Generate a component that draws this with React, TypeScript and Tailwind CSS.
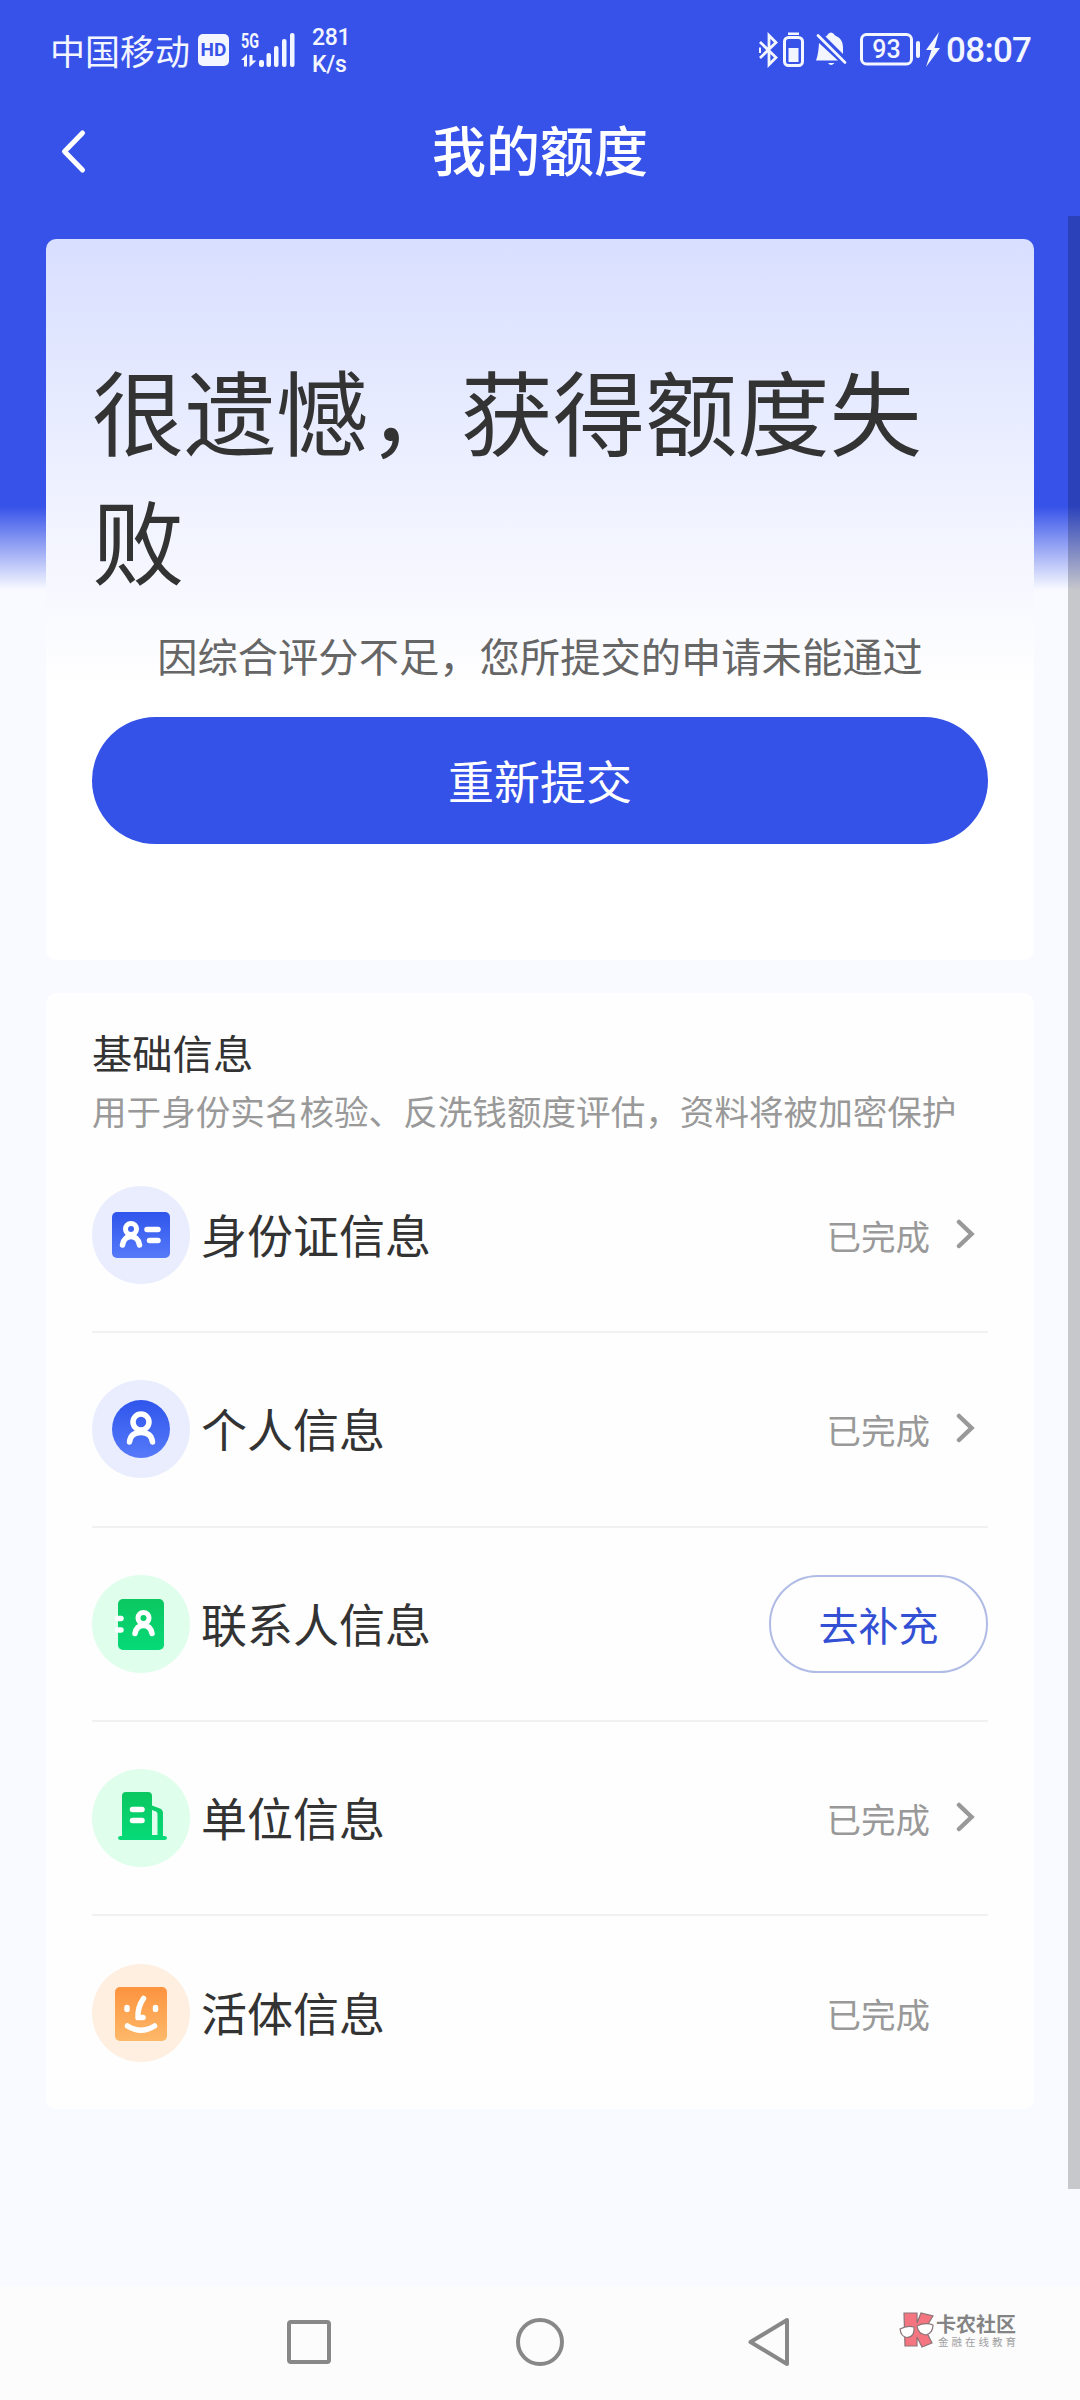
import type { ReactNode } from "react";

function SignalIcon() {
  return (
    <svg className="overflow-visible" width="56" height="36" viewBox="0 0 56 36" fill="#f3f5ff">
      <text x="0" y="15.500" fontFamily="Roboto" fontSize="20" fontWeight="700" textLength="18" lengthAdjust="spacingAndGlyphs">5G</text>
      <path d="M0 28L6 22V34.500H3V28ZM8.500 23H11.500V28.500H15.500L8.500 35Z" />
      <rect x="18" y="28" width="5" height="7" rx="2" />
      <rect x="25.500" y="21" width="4.500" height="14" rx="2" />
      <rect x="33" y="14" width="4.500" height="21" rx="2" />
      <rect x="41" y="7" width="4.500" height="28" rx="2" />
      <rect x="49" y="1" width="4.500" height="34" rx="2" />
    </svg>
  );
}

function StatusBar() {
  return (
    <div className="flex h-[104px] items-start justify-between pl-[50px] pr-[49px] text-[#f3f5ff]">
      <div className="flex items-start">
        <span className="mt-[24px] w-[142px] whitespace-nowrap text-[35px] leading-[52px]">中国移动</span>
        <span className="ml-[6px] mt-[34px] flex h-[32px] w-[31px] items-center justify-center rounded-[5px] bg-[#f3f5ff] font-[Roboto] text-[19px] font-bold leading-[32px] text-[#3652e9]">
          HD
        </span>
        <span className="ml-[12px] mt-[32px]"><SignalIcon /></span>
        <span className="ml-[15px] mt-[24px] font-[Roboto] text-[23px] font-medium leading-[27px] tracking-[-0.3px]">281<br />K/s</span>
      </div>
      <div className="flex items-start">
        <svg className="mt-[32px]" width="182" height="36" viewBox="758 32 182 36" fill="none" stroke="#f3f5ff">
          <path d="M760 42L776 57.500L769 64.500V35.500L776 42.500L760 58" strokeWidth="2.800" />
          <path d="M760 47.500V53" strokeWidth="2" />
          <rect x="784.500" y="37.500" width="18" height="28" rx="4" strokeWidth="3" />
          <rect x="788" y="32.500" width="11" height="2.500" fill="#f3f5ff" stroke="none" />
          <rect x="788.500" y="48" width="10" height="14" fill="#f3f5ff" stroke="none" />
          <path d="M825.500 36.500Q828 35 828 34Q831 31 834 34Q834 35 836 36Q843 39 843 47V54ZM819 43L838 60.500H816Q818.500 54 819 43ZM828 63H834.500Q831 67 828 63Z" fill="#f3f5ff" stroke="none" />
          <path d="M818 35.500L845 62.500" strokeWidth="2.800" strokeLinecap="round" />
          <rect x="861.500" y="34.500" width="50" height="29.500" rx="5" strokeWidth="3" />
          <text x="886.500" y="58" textAnchor="middle" fontFamily="Roboto" fontSize="25" fontWeight="500" fill="#f3f5ff" stroke="none">93</text>
          <path d="M918 43V56" strokeWidth="4" strokeLinecap="round" />
          <path d="M939 32L926 50H931.500L926 67L940 48H934.500Z" fill="#f3f5ff" stroke="none" />
        </svg>
        <span className="ml-[6px] mt-[30px] w-[85px] font-[Roboto] text-[35px] font-medium leading-[42px] tracking-[-0.7px]">08:07</span>
      </div>
    </div>
  );
}

function IdCardIcon() {
  return (
    <svg width="98" height="98" viewBox="0 0 98 98" fill="none" stroke="#fff" strokeLinecap="round">
      <circle cx="49" cy="49" r="49" fill="#e9edfe" stroke="none" />
      <rect x="20" y="26" width="58" height="46" rx="5" fill="url(#blue)" stroke="none" />
      <circle cx="39" cy="43" r="5.500" strokeWidth="5" />
      <path d="M30.500 59Q32 50.500 39 50.500Q46 50.500 47.500 59" strokeWidth="5.500" />
      <path d="M55 43.500H66M57.500 54.500H66" strokeWidth="5.500" />
    </svg>
  );
}

function PersonIcon() {
  return (
    <svg width="98" height="98" viewBox="0 0 98 98" fill="none" stroke="#fff" strokeLinecap="round">
      <circle cx="49" cy="49" r="49" fill="#e9edfe" stroke="none" />
      <circle cx="49" cy="49" r="29" fill="url(#blue)" stroke="none" />
      <circle cx="49" cy="42" r="8" strokeWidth="5.500" />
      <path d="M37.500 62Q38.500 52.500 49 52.500Q59.500 52.500 60.500 62" strokeWidth="5.500" />
    </svg>
  );
}

function ContactIcon() {
  return (
    <svg width="98" height="98" viewBox="0 0 98 98" fill="none" stroke="#fff" strokeLinecap="round">
      <circle cx="49" cy="49" r="49" fill="#e0feec" stroke="none" />
      <rect x="26" y="24" width="46" height="51" rx="5" fill="url(#green)" stroke="none" />
      <circle cx="51.500" cy="43" r="5.500" strokeWidth="5" />
      <path d="M43 58.500Q44.500 50.500 51.500 50.500Q58.500 50.500 60 58.500" strokeWidth="5.500" />
      <path d="M25.500 43.500H29M25.500 55H29" strokeWidth="5.500" />
    </svg>
  );
}

function BuildingIcon() {
  return (
    <svg width="98" height="98" viewBox="0 0 98 98" fill="none" stroke="#fff" strokeLinecap="round">
      <circle cx="49" cy="49" r="49" fill="#e0feec" stroke="none" />
      <path d="M30 67V27Q30 23 34 23H56Q60 23 60 27V36.500L68 39.500Q71 41 71 44V67H72.500Q75 67 75 69Q75 71 72.500 71H28.500Q26 71 26 69Q26 67 28.500 67Z" fill="url(#green)" stroke="none" />
      <path d="M60 41L64 42.500Q65.500 43 65.500 45V66H60Z" fill="#e0feec" stroke="none" />
      <path d="M40.500 40.500H50M40.500 51.500H50" strokeWidth="5.500" />
    </svg>
  );
}

function FaceIcon() {
  return (
    <svg width="98" height="98" viewBox="0 0 98 98" fill="none" stroke="#fff" strokeLinecap="round" strokeLinejoin="round">
      <circle cx="49" cy="49" r="49" fill="#feefe1" stroke="none" />
      <rect x="23" y="23" width="52" height="54" rx="5" fill="url(#orange)" stroke="none" />
      <path d="M51.500 34.500Q45.500 43 46 53.500H51" strokeWidth="5.500" />
      <path d="M35.500 62Q49 70.500 62.500 62" strokeWidth="5.500" />
      <path d="M35 43.500V45.500M63.500 43.500V45.500" strokeWidth="5.500" />
    </svg>
  );
}

function Gradients() {
  return (
    <svg width="0" height="0" className="absolute">
      <defs>
        <linearGradient id="blue" x1="0" y1="0" x2="0" y2="1"><stop stopColor="#2f55ec" /><stop offset="1" stopColor="#567af9" /></linearGradient>
        <linearGradient id="green" x1="0" y1="0" x2="0" y2="1"><stop stopColor="#0bc760" /><stop offset="1" stopColor="#06da78" /></linearGradient>
        <linearGradient id="orange" x1="0" y1="0" x2="0" y2="1"><stop stopColor="#fd933f" /><stop offset="1" stopColor="#fdb969" /></linearGradient>
      </defs>
    </svg>
  );
}

type Item = { icon: ReactNode; label: string; state: "done" | "todo"; arrow: boolean };

const items: Item[] = [
  { icon: <IdCardIcon />, label: "身份证信息", state: "done", arrow: true },
  { icon: <PersonIcon />, label: "个人信息", state: "done", arrow: true },
  { icon: <ContactIcon />, label: "联系人信息", state: "todo", arrow: false },
  { icon: <BuildingIcon />, label: "单位信息", state: "done", arrow: true },
  { icon: <FaceIcon />, label: "活体信息", state: "done", arrow: false },
];

function Row({ item }: { item: Item }) {
  return (
    <li className="flex h-[194.3px] items-center border-b-2 border-[#f1f1f2] last:border-b-0">
      {item.icon}
      <span className="ml-[11px] flex-1 pb-[4px] text-[46px] leading-[64px] text-[#333]">{item.label}</span>
      {item.state === "todo" ? (
        <button className="h-[98px] w-[219px] rounded-full border-2 border-[#b0bce6] text-[40px] leading-[58px] text-[#3350d4]">去补充</button>
      ) : (
        <span className="text-[34.5px] leading-[50px] text-[#999]">已完成</span>
      )}
      {item.state === "done" && (
        <span className="flex w-[58px] pl-[26px]">
          {item.arrow && (
            <svg className="mb-[2px]" width="20" height="30" viewBox="0 0 20 30" fill="none" stroke="#999" strokeWidth="4.500" strokeLinecap="round">
              <path d="M3 3L15.500 15L3 27" />
            </svg>
          )}
        </span>
      )}
    </li>
  );
}

function NavBar() {
  return (
    <nav className="flex h-[114px] items-start bg-[#fcfcfd] pt-[31px]">
      <div className="ml-[286px] flex gap-[183px]">
        <svg width="46" height="50" viewBox="0 0 46 50" fill="none" stroke="#888" strokeWidth="4"><rect x="3" y="5" width="40" height="40" rx="2" /></svg>
        <svg width="50" height="50" viewBox="0 0 50 50" fill="none" stroke="#888" strokeWidth="4"><circle cx="25" cy="25" r="22" /></svg>
        <svg width="44" height="50" viewBox="0 0 44 50" fill="none" stroke="#888" strokeWidth="4" strokeLinejoin="round"><path d="M39 3V47L2.500 25Z" /></svg>
      </div>
      <div className="ml-[107px] mt-[-6px] flex">
        <svg width="36" height="38" viewBox="0 0 36 38" stroke="#8d7478" strokeWidth="1.200">
          <path d="M5 2H18V12L22 2L34 5L26 18L33 32L23 36L18 26V35H6Z" fill="#f4747f" />
          <path d="M1 18Q8 14 15 16Q16 26 8 26.500Q2 26 1 18ZM18 15Q26 11 34 14Q34 22 27 24Q19 23 18 15Z" fill="#fff" />
        </svg>
        <div className="ml-px whitespace-nowrap text-[#848484]">
          <div className="mt-[2px] text-[20px] font-bold leading-[22px]">卡农社区</div>
          <div className="pl-[2px] text-[10.5px] leading-[14px] tracking-[3px] text-[#a0a0a0]">金融在线教育</div>
        </div>
      </div>
    </nav>
  );
}

export default function App() {
  return (
    <div className="relative flex h-[2400px] w-[1080px] flex-col overflow-hidden bg-[linear-gradient(to_bottom,#3652e9_0px,#3652e9_506px,#f9faff_590px)] font-['Noto_Sans_CJK_SC','Noto_Sans',sans-serif]">
      <Gradients />
      <StatusBar />
      <header className="grid h-[135px] grid-cols-[1fr_auto_1fr] items-start text-white">
        <svg className="ml-[60px] mt-[25px]" width="28" height="46" viewBox="0 0 28 46" fill="none" stroke="#fff" strokeWidth="5" strokeLinecap="round" strokeLinejoin="round"><path d="M22.500 4L4.500 22.500L22.500 41" /></svg>
        <h1 className="mt-[5px] text-[54px] font-medium leading-[80px]">我的额度</h1>
      </header>
      <main className="flex flex-1 flex-col gap-[33px] px-[46px]">
        <section className="h-[721px] rounded-[10px] bg-[linear-gradient(to_bottom,#d8dfff_0px,#f2f4ff_290px,#ffffff_450px)] px-[46px] pt-[106px]">
          <h2 className="text-[92.2px] leading-[129px] text-[#333]">很遗憾，获得额度失败</h2>
          <p className="mt-[22px] whitespace-nowrap text-center text-[40.3px] leading-[60px] text-[#666]">因综合评分不足，您所提交的申请未能通过</p>
          <button className="mt-[32px] h-[127px] w-full rounded-full bg-[#3451e8] pb-[2px] text-[46px] text-white">重新提交</button>
        </section>
        <section className="h-[1116px] rounded-[10px] bg-[#fefefe] px-[46px] pt-[31px]">
          <h3 className="text-[40.3px] leading-[56px] text-[#333]">基础信息</h3>
          <p className="mt-[5px] whitespace-nowrap text-[34.6px] leading-[50px] text-[#999]">用于身份实名核验、反洗钱额度评估，资料将被加密保护</p>
          <ul className="mt-[4px]">
            {items.map((item) => <Row key={item.label} item={item} />)}
          </ul>
        </section>
      </main>
      <NavBar />
      <div className="absolute right-0 top-[216px] h-[1973px] w-[12px] bg-black/20" />
    </div>
  );
}
